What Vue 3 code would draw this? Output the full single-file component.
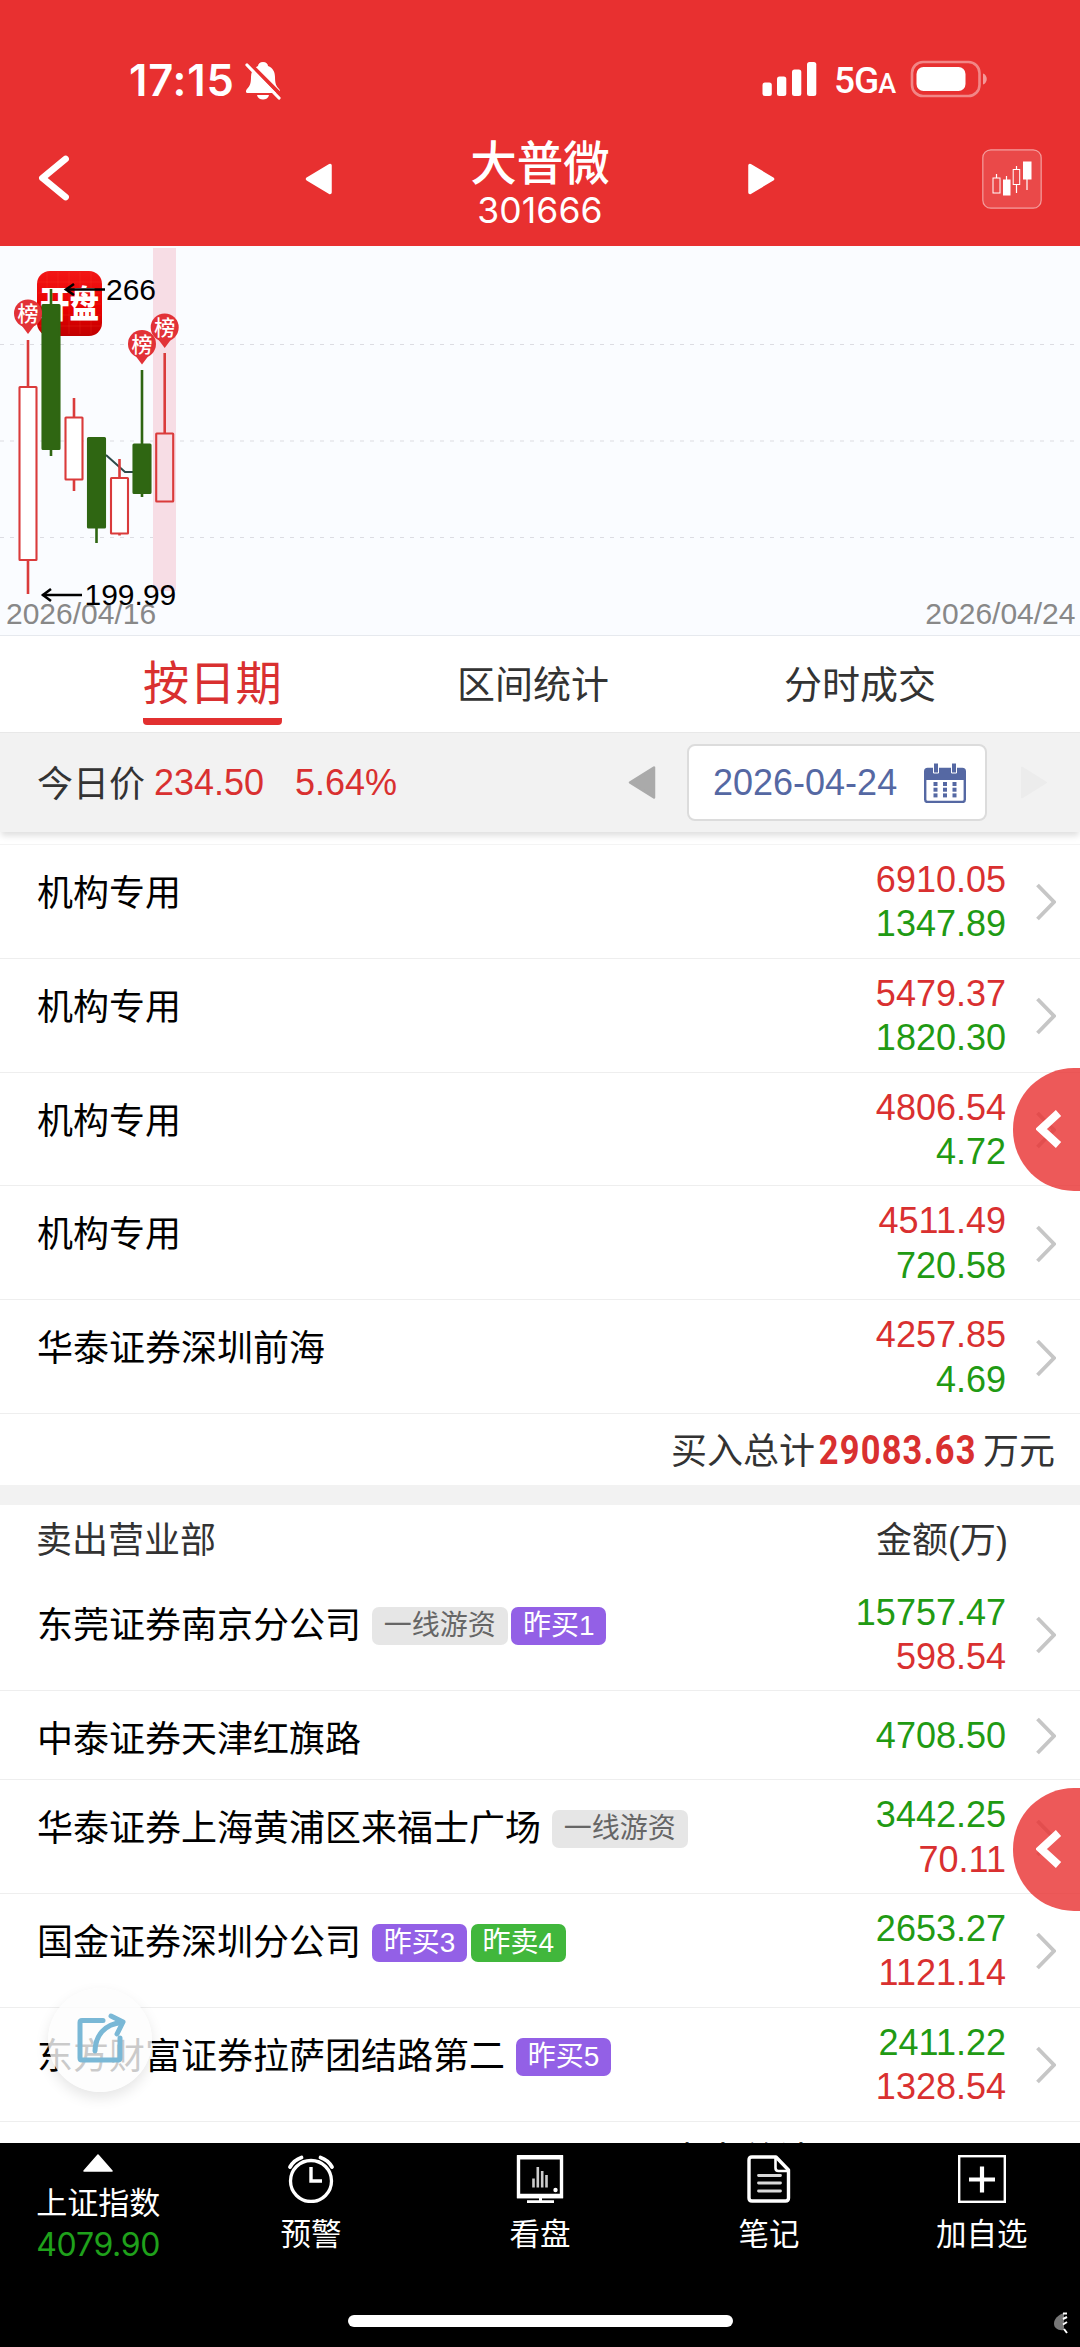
<script setup>
const candles = [
  { x: 28, up: true, high: 340, top: 387, bottom: 560, low: 594 },
  { x: 51, up: false, high: 289, top: 305, bottom: 449, low: 456 },
  { x: 74, up: true, high: 398, top: 417.5, bottom: 479.5, low: 491 },
  { x: 96.5, up: false, high: 438, top: 438, bottom: 527.5, low: 543 },
  { x: 119.5, up: true, high: 459, top: 478, bottom: 533.5, low: 535.5 },
  { x: 142, up: false, high: 370, top: 444.5, bottom: 493, low: 497 },
  { x: 164.7, up: true, high: 353, top: 433.5, bottom: 501.5, low: 501.5 },
]
const pins = [
  { x: 28, y: 314 },
  { x: 142, y: 344.5 },
  { x: 164.7, y: 328 },
]
const buys = [
  { name: '机构专用', buy: '6910.05', sell: '1347.89' },
  { name: '机构专用', buy: '5479.37', sell: '1820.30' },
  { name: '机构专用', buy: '4806.54', sell: '4.72' },
  { name: '机构专用', buy: '4511.49', sell: '720.58' },
  { name: '华泰证券深圳前海', buy: '4257.85', sell: '4.69' },
]
const sells = [
  { name: '东莞证券南京分公司', sell: '15757.47', buy: '598.54', tags: [['一线游资', 'gray'], ['昨买1', 'purple']] },
  { name: '中泰证券天津红旗路', sell: '4708.50', tags: [] },
  { name: '华泰证券上海黄浦区来福士广场', sell: '3442.25', buy: '70.11', tags: [['一线游资', 'gray']] },
  { name: '国金证券深圳分公司', sell: '2653.27', buy: '1121.14', tags: [['昨买3', 'purple'], ['昨卖4', 'green']] },
  { name: '东方财富证券拉萨团结路第二', sell: '2411.22', buy: '1328.54', tags: [['昨买5', 'purple']] },
]
const dots = [0, 1, 2]
</script>

<template>
  <div class="app">
    <header class="header">
      <div class="status">
        <span class="time">17:15</span>
        <svg class="bell" width="36" height="40" viewBox="0 0 36 40">
          <path d="M18 1c-3 0-5 2-5 4-5 2-7 6-7 11 0 6-1 9-4 12-1 1-2 4 1 4h30c3 0 2-3 1-4-3-3-4-6-4-12 0-5-2-9-7-11 0-2-2-4-5-4z" fill="#fff" />
          <path d="M12 34h12c-1 6-11 6-12 0z" fill="#fff" />
          <path d="M3 1L37 35" stroke="#e83030" stroke-width="4" />
          <path d="M2 4L34 37" stroke="#fff" stroke-width="3.2" stroke-linecap="round" />
        </svg>
        <div class="status-right">
          <svg width="55" height="36" viewBox="0 0 55 36" fill="#fff">
            <rect x="0.5" y="21.5" width="9.3" height="13.5" rx="2.5" />
            <rect x="15" y="15.5" width="9.3" height="19.5" rx="2.5" />
            <rect x="30" y="8.5" width="9.3" height="26.5" rx="2.5" />
            <rect x="45" y="1" width="9.3" height="34" rx="2.5" />
          </svg>
          <span class="net">5G<small>A</small></span>
          <svg width="78" height="38" viewBox="0 0 78 38">
            <rect x="2" y="2" width="67.5" height="34" rx="11" fill="none" stroke="#fff" stroke-opacity=".42" stroke-width="2.6" />
            <rect x="6.5" y="7" width="49" height="24" rx="7" fill="#fff" />
            <path d="M73 13.5c5 1.5 5 9.5 0 11z" fill="#fff" fill-opacity=".5" />
          </svg>
        </div>
      </div>
      <div class="titlebar">
        <svg class="back" width="34" height="50" viewBox="0 0 34 50">
          <path d="M28.5 6L5.500 25L28.500 44" fill="none" stroke="#fff" stroke-width="6.8" stroke-linecap="round" stroke-linejoin="round" />
        </svg>
        <svg class="prev" width="28" height="32" viewBox="0 0 28 32"><path d="M2.5 16L25 2.5V29.5Z" fill="#fff" stroke="#fff" stroke-width="3.5" stroke-linejoin="round" /></svg>
        <div class="title">
          <h1>大普微</h1>
          <p>301666</p>
        </div>
        <svg class="next" width="28" height="32" viewBox="0 0 28 32"><path d="M25.5 16L3 2.5V29.5Z" fill="#fff" stroke="#fff" stroke-width="3.5" stroke-linejoin="round" /></svg>
        <svg class="kline" width="60" height="60" viewBox="0 0 60 60">
          <rect x=".8" y=".8" width="58.4" height="58.4" rx="8" fill="#fff" fill-opacity=".12" stroke="#fff" stroke-opacity=".5" stroke-width="1.2" />
          <g stroke="#fff" fill="none">
            <path d="M14.5 25v4M24.5 27v4M34.5 17v4M34.5 36v8M45 30v11" stroke-width="1.2" />
            <rect x="11" y="29" width="7" height="15" />
            <rect x="31.2" y="20.5" width="6.5" height="15" />
            <path d="M21 30.5h7.5v16h-7.5zM41 12.5h8.5v18h-8.5z" fill="#fff" stroke="none" />
          </g>
        </svg>
      </div>
    </header>

    <section class="chart">
      <svg width="1080" height="390" viewBox="0 246 1080 390">
        <path d="M0 344.5H1080M0 441H1080M0 537.5H1080" stroke="#dcdce2" stroke-width="1.2" stroke-dasharray="4 6" />
        <rect x="153" y="248" width="23" height="343" fill="#f7dde5" />
        <defs>
          <linearGradient id="mark" x1="0" y1="0" x2="0" y2="1">
            <stop offset="0" stop-color="#f21616" />
            <stop offset=".6" stop-color="#e80000" />
            <stop offset="1" stop-color="#c00000" />
          </linearGradient>
        </defs>
        <rect x="37" y="271" width="65" height="65" rx="13" fill="url(#mark)" />
        <path d="M47 272v62M58 272v62M69 272v62M80 272v62M91 272v62M38 282h63M38 293h63M38 304h63M38 315h63M38 326h63" stroke="#ff5a3c" stroke-opacity=".22" stroke-width=".8" />
        <text transform="translate(69.5 317.500) scale(.8 1)" text-anchor="middle" class="mark-text">开盘</text>
        <path d="M106 455L125 472L133 472" fill="none" stroke="#2d4a4a" stroke-width="2" />
        <g v-for="c in candles" :key="c.x" :stroke="c.up ? '#da3b3b' : '#2f6612'">
          <path :d="`M${c.x} ${c.high}V${c.top}M${c.x} ${c.bottom}V${c.low}`" stroke-width="2.6" />
          <rect :x="c.x - 8.5" :y="c.top" width="17" :height="c.bottom - c.top" rx=".5" :fill="c.up ? (c.x > 160 ? '#f7dde5' : '#fff') : '#2f6612'" stroke-width="2.1" />
        </g>
        <g v-for="p in pins" :key="p.x">
          <path :d="`M${p.x} ${p.y + 20}L${p.x - 9} ${p.y + 8}H${p.x + 9}Z`" fill="#e23237" />
          <circle :cx="p.x" :cy="p.y - 0.5" r="14" fill="#e23237" />
          <text :x="p.x" :y="p.y + 7" text-anchor="middle" class="pin-text">榜</text>
        </g>
        <g stroke="#000" stroke-width="2.6" fill="none">
          <path d="M105 289.500H66M42.500 595H82" />
          <path d="M74 284L66 289.500L74 295M51 589L43 595L51 601" />
        </g>
        <text x="106" y="299.500" class="num">266</text>
        <text x="6" y="624" class="num muted">2026/04/16</text>
        <text x="1075.500" y="624" text-anchor="end" class="num muted">2026/04/24</text>
        <text x="84.500" y="605" class="num">199.99</text>
      </svg>
    </section>

    <nav class="tabs">
      <span class="tab active">按日期</span>
      <span class="tab">区间统计</span>
      <span class="tab">分时成交</span>
    </nav>

    <section class="pricebar">
      <span class="label">今日价</span>
      <span class="price">234.50</span>
      <span class="pct">5.64%</span>
      <svg class="day-prev" width="28" height="35" viewBox="0 0 28 35"><path d="M2 17.5L26 2.5V32.5Z" fill="#aaa" stroke="#aaa" stroke-width="2.5" stroke-linejoin="round" /></svg>
      <div class="date">
        <span>2026-04-24</span>
        <svg width="42" height="40" viewBox="0 0 42 40">
          <rect x="1.2" y="6" width="39.6" height="33" rx="2.5" fill="#fff" stroke="#5568a3" stroke-width="2.4" />
          <path d="M1 6h40v11H1z" fill="#5568a3" />
          <path d="M9.5 0h5v10h-5zM27.5 0h5v10h-5z" fill="#5568a3" stroke="#fff" stroke-width="1" />
          <g fill="#5568a3">
            <template v-for="r in dots" :key="r">
              <rect v-for="c in dots" :key="c" :x="9.5 + c * 9.5" :y="19 + r * 5.7" width="4" height="4" />
            </template>
          </g>
        </svg>
      </div>
      <svg class="day-next" width="28" height="35" viewBox="0 0 28 35"><path d="M26 17.5L2 2.5V32.5Z" fill="#ececec" stroke="#ececec" stroke-width="2" stroke-linejoin="round" /></svg>
    </section>

    <main class="content">
      <div class="list buy-list">
        <div v-for="(r, i) in buys" :key="i" class="row">
          <div class="name">{{ r.name }}</div>
          <div class="amounts"><span class="red">{{ r.buy }}</span><span class="green">{{ r.sell }}</span></div>
          <svg class="chev" width="20" height="38" viewBox="0 0 20 38"><path d="M1.5 2L18 19L1.5 36" fill="none" stroke="#c6c6c6" stroke-width="3.8" /></svg>
        </div>
      </div>
      <div class="total">买入总计<b><i>29083.63</i></b>万元</div>
      <div class="band"></div>
      <div class="list-head"><span>卖出营业部</span><span>金额(万)</span></div>
      <div class="list">
        <div v-for="(r, i) in sells" :key="i" class="row" :class="{ single: !r.buy }">
          <div class="name">
            {{ r.name }}
            <div class="tags"><span v-for="t in r.tags" :key="t[0]" class="tag" :class="t[1]">{{ t[0] }}</span></div>
          </div>
          <div class="amounts"><span class="green">{{ r.sell }}</span><span v-if="r.buy" class="red">{{ r.buy }}</span></div>
          <svg class="chev" width="20" height="38" viewBox="0 0 20 38"><path d="M1.5 2L18 19L1.5 36" fill="none" stroke="#c6c6c6" stroke-width="3.8" /></svg>
        </div>
      </div>
      <div class="total cut">卖出总计</div>
    </main>

    <div class="drawer upper">
      <svg width="26" height="40" viewBox="0 0 26 40"><path d="M22.5 4L5 20L22.5 36" fill="none" stroke="#fff" stroke-width="7.8" /></svg>
    </div>
    <div class="drawer lower">
      <svg width="26" height="40" viewBox="0 0 26 40"><path d="M22.5 4L5 20L22.5 36" fill="none" stroke="#fff" stroke-width="7.8" /></svg>
    </div>
    <div class="share">
      <svg width="50" height="54" viewBox="0 0 50 54" fill="none" stroke="#7ab8d6" stroke-width="5" stroke-linecap="round" stroke-linejoin="round">
        <path d="M27 9.500H6q-2 0-2 2V47q0 2 2 2H42q2 0 2-2V27" />
        <path d="M19 40C19.500 25 28 13 46 11.500" />
        <path d="M35 5L47 11L41 23" />
      </svg>
    </div>

    <footer class="bottom">
      <div class="nav">
        <div class="item index">
          <svg width="32" height="18" viewBox="0 0 32 18"><path d="M16 1L30 17H2Z" fill="#fff" stroke="#fff" stroke-width="1.5" stroke-linejoin="round" /></svg>
          <span class="index-name">上证指数</span>
          <span class="index-val">4079.90</span>
        </div>
        <div class="item">
          <svg width="48" height="48" viewBox="0 0 48 48" fill="none" stroke="#fff" stroke-width="3.3" stroke-linecap="round">
            <circle cx="24" cy="26" r="20.5" />
            <path d="M24 12V26H35" stroke-linecap="butt" stroke-width="3.4" />
            <path d="M3 12Q7 5 14.500 2.500M45 12Q41 5 33.500 2.500" stroke-width="3.8" />
          </svg>
          <span>预警</span>
        </div>
        <div class="item">
          <svg width="48" height="48" viewBox="0 0 48 48" fill="none" stroke="#fff">
            <path d="M2.500 2H45.500V41.500H2.500Z" stroke-width="3.4" />
            <path d="M1 41H47M1 2.300H47" stroke-width="4.400" />
            <path d="M17.500 23.500V32.500M21.800 12V32.500M26.200 16V32.500M30.500 20V32.500" stroke-width="2.600" stroke-opacity=".8" />
            <circle cx="39.500" cy="35" r="2.200" fill="#fff" stroke="none" />
            <path d="M11 46.700H38M24.500 42v4" stroke-width="3" />
          </svg>
          <span>看盘</span>
        </div>
        <div class="item">
          <svg width="48" height="48" viewBox="0 0 48 48" fill="none" stroke="#fff" stroke-width="3.4" stroke-linejoin="round">
            <path d="M7 2H31L43.500 15V43q0 3-3 3H7q-3 0-3-3V5q0-3 3-3Z" />
            <path d="M30.500 2.500V13q0 3 3 3H43" stroke-width="2.600" />
            <path d="M13.500 20.500H35.500M13.500 28H35.500M13.500 36H35.500" stroke-width="2.800" stroke-opacity=".85" stroke-linecap="round" />
          </svg>
          <span>笔记</span>
        </div>
        <div class="item">
          <svg width="48" height="48" viewBox="0 0 48 48" fill="none" stroke="#fff">
            <rect x="1.2" y="1.2" width="45.6" height="45.6" stroke-width="2.4" />
            <path d="M24 11.500V37.500M11 24.500H37" stroke-width="4.200" />
          </svg>
          <span>加自选</span>
        </div>
      </div>
      <div class="home"></div>
      <svg class="corner" width="16" height="24" viewBox="0 0 16 24">
        <path d="M11 2C5 4 1 8 1 12.500C1 17 5 20 11 19Z" fill="#777" />
        <path d="M10 2.500H14M10 8L14 6M10 13.500L14 11M11 18L14 22" stroke="#fff" stroke-width="2" fill="none" />
      </svg>
    </footer>
  </div>
</template>

<style>
body {
  margin: 0;
  background: #fff;
}
</style>

<style scoped>
.app {
  position: relative;
  display: flex;
  flex-direction: column;
  width: 1080px;
  height: 2347px;
  overflow: hidden;
  background: #fff;
  color: #333;
  font-family: "Liberation Sans", "Noto Sans CJK SC", sans-serif;
}
svg {
  display: block;
  flex: none;
}
.header {
  flex: none;
  height: 246px;
  background: #e83030;
  color: #fff;
}
.status {
  display: flex;
  align-items: flex-start;
  height: 124px;
  padding: 59px 92px 0 129px;
  box-sizing: border-box;
}
.time {
  width: 116px;
  font: 600 43.5px/42px Inter, sans-serif;
  letter-spacing: 0.8px;
}
.bell {
  margin-top: 2px;
}
.status-right {
  display: flex;
  margin-left: auto;
  align-items: flex-start;
}
.status-right svg {
  margin-top: 1px;
}
.status-right svg:first-child {
  margin: 2px 2px 0 0;
}
.net {
  width: 76px;
  box-sizing: border-box;
  padding-left: 15px;
  font: 500 37px/43px Roboto, sans-serif;
  letter-spacing: -1px;
  white-space: nowrap;
}
.status-right .net {
  margin-right: 15px;
}
.net small {
  font-size: 27px;
}
.titlebar {
  display: flex;
  height: 122px;
}
.back {
  margin: 29px 0 0 37px;
}
.prev {
  margin: 39px 0 0 234px;
}
.title {
  width: 300px;
  margin: 8px 57px 0;
  text-align: center;
}
h1 {
  margin: 0;
  font: 500 46.5px/56px "Noto Sans CJK SC", sans-serif;
}
.title p {
  margin: 3px 0 0;
  font: 400 35.5px/40px Inter, sans-serif;
  letter-spacing: 0.1px;
}
.next {
  margin: 39px 0 0;
}
.kline {
  margin: 25px 0 0 207px;
}
.chart {
  flex: none;
  height: 389px;
  background: #fafcff;
  border-bottom: 1px solid #e6e9ee;
  overflow: hidden;
}
.num {
  font-size: 30px;
  fill: #000;
}
.muted {
  fill: #888;
}
.mark-text {
  font: 900 37px "Noto Sans CJK SC", sans-serif;
  fill: #fff;
}
.pin-text {
  font: 500 21px "Noto Sans CJK SC", sans-serif;
  fill: #fff;
}
.tabs {
  flex: none;
  display: flex;
  justify-content: space-between;
  height: 96px;
  padding: 0 144px 0 143px;
  border-bottom: 1px solid #e8e8e8;
}
.tab {
  font-size: 38px;
  line-height: 98px;
}
.tab.active {
  height: 82px;
  font-size: 46.3px;
  line-height: 97px;
  color: #d93030;
  border-bottom: 7px solid transparent;
  background: linear-gradient(#e23030, #e23030) bottom / 100% 7px no-repeat border-box;
  border-radius: 4px;
}
.pricebar {
  flex: none;
  display: flex;
  align-items: center;
  height: 99px;
  background: #f2f2f2;
  box-shadow: 0 5px 6px -1px rgba(0, 0, 0, 0.12);
  font-size: 36px;
}
.label {
  width: 117px;
  margin-top: -3px;
  padding-left: 37px;
}
.price {
  width: 141px;
  color: #d93030;
}
.pct {
  width: 333px;
  color: #d93030;
}
.date {
  display: flex;
  align-items: center;
  justify-content: space-between;
  box-sizing: border-box;
  width: 300px;
  height: 77px;
  margin-left: 31px;
  padding: 0 19px 0 24px;
  border: 2.5px solid #dcdcdc;
  border-radius: 8px;
  background: #fff;
  color: #5568a3;
}
.day-next {
  margin-left: 33px;
}
.content {
  height: 1311px;
  overflow: hidden;
  font-size: 36px;
}
.buy-list {
  margin-top: 12px;
  border-top: 1px solid #f4f4f4;
}
.row {
  display: flex;
  align-items: center;
  box-sizing: border-box;
  height: 113.8px;
  padding: 2px 24px 0 37px;
  border-bottom: 1.5px solid #eee;
}
.row.single {
  height: 89px;
}
.name {
  display: flex;
  align-self: flex-start;
  align-items: center;
  flex: 1;
  line-height: 93px;
  color: #000;
  white-space: nowrap;
}
.tags {
  display: flex;
  gap: 3.5px;
  margin: 1px 0 0 11px;
}
.tag {
  height: 38px;
  padding: 0 11.8px;
  border-radius: 7px;
  font-size: 28px;
  line-height: 37px;
}
.gray {
  background: #e6e6e6;
  color: #666;
}
.purple {
  background: #9360e6;
  color: #fff;
}
.tag.green {
  background: #41b73c;
  color: #fff;
}
.amounts {
  display: flex;
  flex-direction: column;
  align-items: flex-end;
  margin-right: 30px;
  line-height: 44.3px;
}
.amounts .red {
  color: #d93030;
}
.amounts .green {
  color: #219a13;
}
.total {
  display: flex;
  justify-content: flex-end;
  height: 71px;
  padding-right: 25px;
  line-height: 75px;
}
.total b {
  display: flex;
  justify-content: center;
  width: 168px;
  padding-right: 3px;
  box-sizing: border-box;
  font: 700 40px/73px Roboto, sans-serif;
  color: #d93030;
}
.total i {
  font-style: normal;
  letter-spacing: 1.4px;
  transform: scaleX(0.86);
}
.total.cut {
  padding-right: 267px;
  line-height: 77px;
}
.band {
  height: 20px;
  background: #f2f2f2;
}
.list-head {
  display: flex;
  justify-content: space-between;
  height: 72.5px;
  padding: 0 72px 0 36px;
  line-height: 71px;
}
.drawer {
  position: absolute;
  right: 0;
  box-sizing: border-box;
  width: 67px;
  height: 123px;
  padding: 41px 0 0 23px;
  border-radius: 61px 0 0 61px;
  background: rgba(233, 48, 48, 0.8);
}
.upper {
  top: 1068px;
}
.lower {
  top: 1787.5px;
}
.share {
  position: absolute;
  left: 48px;
  top: 1988px;
  display: flex;
  box-sizing: border-box;
  width: 104px;
  height: 104px;
  padding: 23px 0 0 28px;
  border-radius: 50%;
  background: rgba(252, 252, 252, 0.8);
  box-shadow: 0 6px 14px rgba(0, 0, 0, 0.1);
}
.bottom {
  position: relative;
  flex: none;
  height: 204px;
  background: #000;
  color: #fff;
}
.nav {
  display: flex;
  height: 172px;
}
.item {
  display: flex;
  flex-direction: column;
  align-items: center;
  width: 229px;
  padding-top: 12px;
  font-size: 30.5px;
}
.item:first-child,
.item:last-child {
  width: 196.5px;
}
.item > span {
  margin-top: 11px;
  line-height: 40px;
}
.item > .index-name {
  margin-top: 12px;
  font-size: 31px;
}
.item.index {
  padding-top: 11px;
}
.item > .index-val {
  margin-top: 0;
  font: 400 32px/41px Inter, sans-serif;
  letter-spacing: -0.3px;
  color: #1fa11b;
}
.home {
  width: 385px;
  height: 12px;
  margin: 0 auto;
  border-radius: 6px;
  background: #fff;
}
.corner {
  position: absolute;
  right: 11px;
  bottom: 12px;
}
</style>
